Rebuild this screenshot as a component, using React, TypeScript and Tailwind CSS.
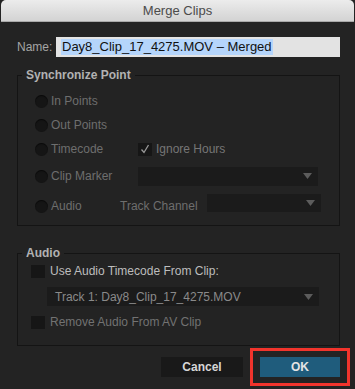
const font = { fontFamily: '"Liberation Sans", Arial, sans-serif' };

function Radio({ label }: { label: string }) {
  return (
    <div className="flex items-center">
      <span className="w-[13px] h-[13px] rounded-full bg-[#151515] shadow-[inset_0_1px_1px_rgba(0,0,0,0.6)]" />
      <span className="ml-[3px] text-[12px] text-[#6e6e6e]">{label}</span>
    </div>
  );
}

function Dropdown({ className, text }: { className: string; text?: string }) {
  return (
    <div className={`flex items-center justify-between bg-[#1b1b1b] ${className}`}>
      <span className="pl-[8px] text-[12px] text-[#8a8a8a]">{text}</span>
      <svg width="9" height="6" viewBox="0 0 9 6" className="mr-[6px]">
        <path d="M0 0h9L4.5 6z" fill="#5c5c5c" />
      </svg>
    </div>
  );
}

function Box({ checked }: { checked?: boolean }) {
  return (
    <span className="w-[14px] h-[13px] bg-[#161616] flex items-center justify-center">
      {checked && (
        <svg width="10" height="10" viewBox="0 0 10 10">
          <path d="M1.5 5.5 L4 8.5 L8.5 1" stroke="#9a9a9a" strokeWidth="1.3" fill="none" />
        </svg>
      )}
    </span>
  );
}

export default function App() {
  return (
    <div className="w-[355px] h-[389px] bg-[#232323] overflow-hidden" style={font}>
      {/* Title bar */}
      <div className="h-[22px] mx-[1px] rounded-t-[5px] bg-gradient-to-b from-[#ececec] to-[#d3d3d3] border-b border-[#a9a9a9] flex items-center justify-center">
        <span className="text-[13px] text-[#4b4b4b]">Merge Clips</span>
      </div>

      <div className="pl-[17px] pr-[15px]">
        {/* Name */}
        <div className="flex items-center mt-[15px] h-[20px]">
          <span className="text-[12px] text-[#a5a5a5] w-[39px]">Name:</span>
          <div className="flex-1 h-[20px] bg-[#e3e3e3] flex items-center pl-[5px]">
            <span className="bg-[#b5d5fb] text-[13px] text-[#111] px-[1px] leading-[16px]">
              Day8_Clip_17_4275.MOV – Merged
            </span>
          </div>
        </div>

        {/* Synchronize Point */}
        <fieldset className="mt-[11px] border border-[#141414] h-[158px]">
          <legend className="ml-[4px] px-[4px] text-[12px] font-bold text-[#b2b2b2] leading-[14px]">
            Synchronize Point
          </legend>
          <div className="pl-[17px]">
            <div className="h-[24px] mt-[7px] flex items-center"><Radio label="In Points" /></div>
            <div className="h-[24px] flex items-center"><Radio label="Out Points" /></div>
            <div className="h-[24px] flex items-center">
              <div className="w-[103px]"><Radio label="Timecode" /></div>
              <Box checked />
              <span className="ml-[4px] text-[12px] text-[#767676]">Ignore Hours</span>
            </div>
            <div className="h-[26px] mt-[2px] flex items-center">
              <div className="w-[103px]"><Radio label="Clip Marker" /></div>
              <Dropdown className="w-[180px] h-[19px]" />
            </div>
            <div className="h-[30px] mt-[2px] flex items-center">
              <div className="w-[85px]"><Radio label="Audio" /></div>
              <span className="text-[12px] text-[#6e6e6e] w-[87px]">Track Channel</span>
              <Dropdown className="w-[114px] h-[18px] mb-[6px]" />
            </div>
          </div>
        </fieldset>

        {/* Audio */}
        <fieldset className="mt-[20px] border border-[#141414] h-[100px]">
          <legend className="ml-[4px] px-[4px] text-[12px] font-bold text-[#b2b2b2] leading-[14px]">
            Audio
          </legend>
          <div className="pl-[13px]">
            <div className="h-[16px] mt-[3px] flex items-center">
              <Box />
              <span className="ml-[5px] text-[12px] text-[#bdbdbd]">Use Audio Timecode From Clip:</span>
            </div>
            <Dropdown className="ml-[16px] mt-[8px] w-[272px] h-[19px]" text="Track 1: Day8_Clip_17_4275.MOV" />
            <div className="h-[16px] mt-[8px] flex items-center">
              <Box />
              <span className="ml-[5px] text-[12px] text-[#727272]">Remove Audio From AV Clip</span>
            </div>
          </div>
        </fieldset>

        {/* Buttons */}
        <div className="flex justify-end items-center mt-[2px]">
          <button className="w-[82px] h-[20px] bg-[#191919] text-[12px] font-bold text-[#d6d6d6] mr-[7px]">
            Cancel
          </button>
          <div className="border-[3px] border-[#f2342c] -mr-[10px] px-[7px] py-[6px]">
            <button className="w-[80px] h-[20px] bg-[#1f5c7c] text-[12px] font-bold text-[#e4e4e4] block">
              OK
            </button>
          </div>
        </div>
      </div>
    </div>
  );
}
